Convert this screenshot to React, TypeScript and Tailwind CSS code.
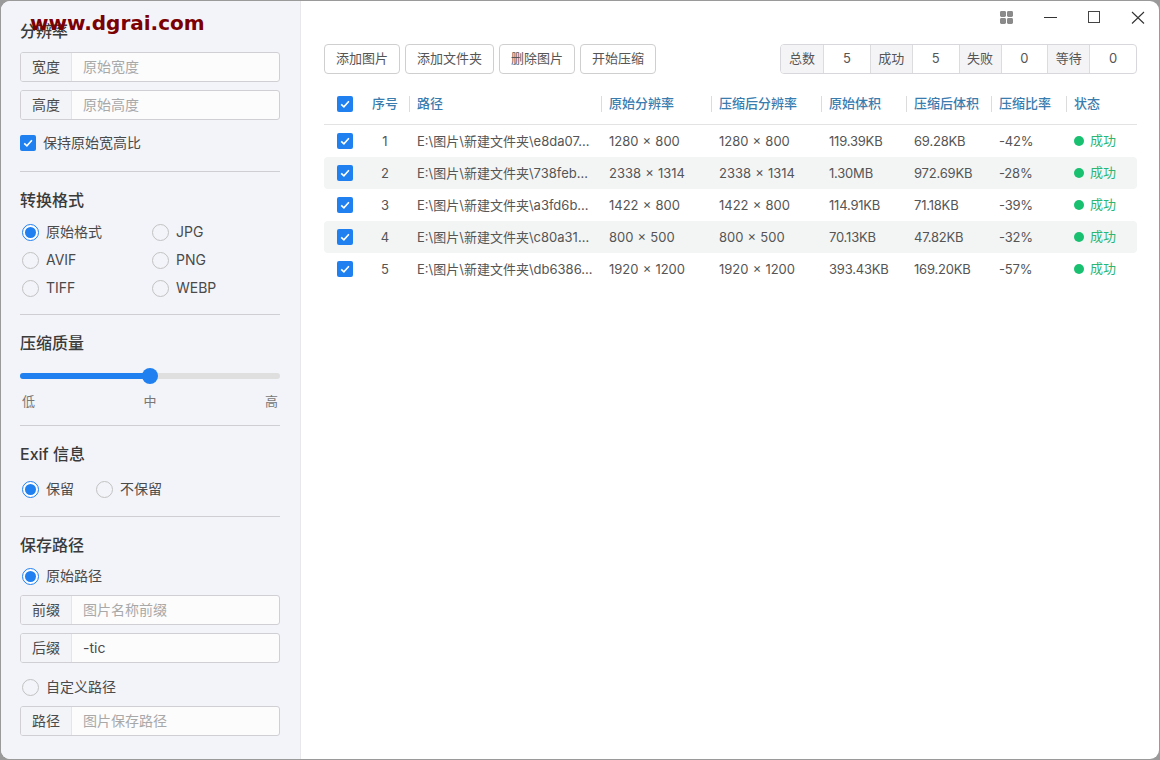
const CJK = '"Noto Sans CJK SC"';

function Check() {
  return (
    <span className="flex h-4 w-4 shrink-0 items-center justify-center rounded-[2px] bg-[#2080f0]">
      <svg width="12" height="12" viewBox="0 0 12 12" fill="none">
        <path d="M2.2 6.3 L4.9 8.9 L9.9 3.3" stroke="#fff" strokeWidth="1.6" />
      </svg>
    </span>
  );
}

function Radio({ on, label, className = "" }: { on?: boolean; label: string; className?: string }) {
  return (
    <div className={"flex items-center " + className}>
      <span className={"flex h-[17px] w-[17px] shrink-0 items-center justify-center rounded-full border " + (on ? "border-[#2080f0] bg-white" : "border-[#c2c2c2] bg-transparent")}>
        {on && <span className="h-[11px] w-[11px] rounded-full bg-[#2080f0]" />}
      </span>
      <span className="ml-[7px] text-[14px] leading-[20px] text-[#4a4a4a]">{label}</span>
    </div>
  );
}

function Field({ label, placeholder, value }: { label: string; placeholder?: string; value?: string }) {
  return (
    <div className="flex h-[30px] overflow-hidden rounded-[3px] border border-[#d0d0d4] bg-[#fcfcfd]">
      <span className="flex w-[51px] shrink-0 items-center justify-center border-r border-[#e4e5e9] bg-[#f3f4f7] pb-[2px] text-[14px] text-[#4a4a4a]">{label}</span>
      <span className={"flex items-center pl-[11px] text-[14px] " + (value ? "pb-[1px] text-[#4a4a4a]" : "pb-[2px] text-[#a8a8a8]")}>{value ?? placeholder}</span>
    </div>
  );
}

function Title({ children, className = "" }: { children: React.ReactNode; className?: string }) {
  return <div className={"text-[16px] font-medium leading-[24px] text-[#3a3a3a] " + className}>{children}</div>;
}

function Divider({ className = "" }: { className?: string }) {
  return <div className={"h-px bg-[#cfcfd3] " + className} />;
}

function Sidebar() {
  return (
    <aside className="flex w-[300px] shrink-0 flex-col border-r border-[#e8e8ea] bg-[#f3f4f9] pl-[19px] pr-5 pt-[18px]">
      <Title>分辨率</Title>
      <div className="mt-[9px] flex flex-col gap-2">
        <Field label="宽度" placeholder="原始宽度" />
        <Field label="高度" placeholder="原始高度" />
      </div>
      <div className="mt-[15px] flex items-center gap-[7px]">
        <Check />
        <span className="text-[14px] leading-[16px] text-[#4a4a4a]">保持原始宽高比</span>
      </div>
      <Divider className="mt-5" />
      <Title className="mt-4">转换格式</Title>
      <div className="mt-[10px] grid grid-cols-[130px_1fr] gap-y-2 pl-[2px]">
        <Radio on label="原始格式" />
        <Radio label="JPG" />
        <Radio label="AVIF" />
        <Radio label="PNG" />
        <Radio label="TIFF" />
        <Radio label="WEBP" />
      </div>
      <Divider className="mt-4" />
      <Title className="mt-4">压缩质量</Title>
      <div className="relative mt-[18px] h-[6px] rounded-full bg-[#dfdfdf]">
        <div className="h-[6px] w-[130px] rounded-full bg-[#2080f0]" />
        <span className="absolute left-[122px] top-[-5px] h-4 w-4 rounded-full bg-[#2080f0]" />
      </div>
      <div className="mt-[13px] flex justify-between pl-[2px] pr-[2px] text-[13px] leading-[18px] text-[#777]">
        <span>低</span>
        <span>中</span>
        <span>高</span>
      </div>
      <Divider className="mt-[15px]" />
      <Title className="mt-4">Exif 信息</Title>
      <div className="mt-[13px] flex pl-[2px]">
        <Radio on label="保留" className="mr-[22px]" />
        <Radio label="不保留" />
      </div>
      <Divider className="mt-[17px]" />
      <Title className="mt-4">保存路径</Title>
      <Radio on label="原始路径" className="mt-[9px] pl-[2px]" />
      <div className="mt-[9px] flex flex-col gap-2">
        <Field label="前缀" placeholder="图片名称前缀" />
        <Field label="后缀" value="-tic" />
      </div>
      <Radio label="自定义路径" className="mt-[14px] pl-[2px]" />
      <div className="mt-[9px]">
        <Field label="路径" placeholder="图片保存路径" />
      </div>
    </aside>
  );
}

function WindowControls() {
  return (
    <div className="flex h-[43px] items-start justify-end">
      <svg className="mt-[10px]" width="14" height="14" viewBox="0 0 14 14" fill="#8a8a8a">
        <rect x="1" y="0" width="6" height="6" rx="1.4" />
        <rect x="8" y="0" width="6" height="6" rx="1.4" />
        <rect x="1" y="7" width="6" height="6" rx="1.4" />
        <rect x="8" y="7" width="6" height="6" rx="1.4" />
      </svg>
      <svg className="ml-[30px] mt-[10px]" width="14" height="14" viewBox="0 0 14 14" fill="none" stroke="#333" strokeWidth="1">
        <path d="M1 6.5 H14" />
      </svg>
      <svg className="ml-[30px] mt-[9px]" width="14" height="14" viewBox="0 0 14 14" fill="none" stroke="#444" strokeWidth="1">
        <rect x="1.5" y="1.5" width="11" height="11" />
      </svg>
      <svg className="ml-[30px] mr-[14px] mt-[10px]" width="14" height="14" viewBox="0 0 14 14" fill="none" stroke="#333" strokeWidth="1.1">
        <path d="M1 1 L13 12.5 M13 1 L1 12.5" />
      </svg>
    </div>
  );
}

function Toolbar() {
  const stats = [
    ["总数", "5"],
    ["成功", "5"],
    ["失败", "0"],
    ["等待", "0"],
  ];
  return (
    <div className="flex h-[30px] items-stretch justify-between">
      <div className="flex gap-[5px]">
        {["添加图片", "添加文件夹", "删除图片", "开始压缩"].map((b) => (
          <span key={b} className="flex items-center rounded-[4px] border border-[#cfcfcf] px-[11px] text-[13px] text-[#555]">{b}</span>
        ))}
      </div>
      <div className="flex w-[357px] overflow-hidden rounded-[4px] border border-[#d8d8dc] text-[13px] text-[#555]">
        {stats.map(([k, v], i) => (
          <div key={k} className="flex flex-1">
            <span className={"flex w-[43px] items-center justify-center border-r border-[#dcdcdf] bg-[#f4f4f7] " + (i ? "border-l" : "")}>{k}</span>
            <span className="flex flex-1 items-center justify-center">{v}</span>
          </div>
        ))}
      </div>
    </div>
  );
}

const GRID = "grid grid-cols-[42px_44px_192px_110px_110px_85px_85px_75px_1fr]";

const HEAD = ["路径", "原始分辨率", "压缩后分辨率", "原始体积", "压缩后体积", "压缩比率", "状态"];

const ROWS = [
  ["1", "E:\\图片\\新建文件夹\\e8da07…", "1280 × 800", "1280 × 800", "119.39KB", "69.28KB", "-42%"],
  ["2", "E:\\图片\\新建文件夹\\738feb…", "2338 × 1314", "2338 × 1314", "1.30MB", "972.69KB", "-28%"],
  ["3", "E:\\图片\\新建文件夹\\a3fd6b…", "1422 × 800", "1422 × 800", "114.91KB", "71.18KB", "-39%"],
  ["4", "E:\\图片\\新建文件夹\\c80a31…", "800 × 500", "800 × 500", "70.13KB", "47.82KB", "-32%"],
  ["5", "E:\\图片\\新建文件夹\\db6386…", "1920 × 1200", "1920 × 1200", "393.43KB", "169.20KB", "-57%"],
];

function Table() {
  return (
    <div className="mt-[14px]">
      <div className={GRID + " h-[37px] items-center border-b border-[#e3e3e3] pb-[4px] text-[13px] font-medium text-[#3a7cae]"}>
        <span className="flex justify-center"><Check /></span>
        <span className="flex h-[16px] items-center justify-center border-r border-[#dcdcdc] pr-[5px]">序号</span>
        {HEAD.map((h, i) => (
          <span key={h} className={"flex h-[16px] items-center pl-[7px] " + (i < 6 ? "border-r border-[#dcdcdc]" : "")}>{h}</span>
        ))}
      </div>
      {ROWS.map((r, i) => (
        <div key={r[0]} className={GRID + " h-8 items-center rounded-[4px] text-[13px] text-[#555] " + (i % 2 ? "bg-[#f3f5f5]" : "")}>
          <span className="flex justify-center"><Check /></span>
          <span className="pr-[6px] pt-px text-center">{r[0]}</span>
          <span className="whitespace-nowrap pl-[7px] pt-px">{r[1]}</span>
          <span className="pl-[7px] pt-px [word-spacing:0.5px]">{r[2]}</span>
          <span className="pl-[7px] pt-px [word-spacing:0.5px]">{r[3]}</span>
          <span className="pl-[7px] pt-px tracking-[-0.2px]">{r[4]}</span>
          <span className="pl-[7px] pt-px tracking-[-0.2px]">{r[5]}</span>
          <span className="pl-[7px] pt-px tracking-[-0.2px]">{r[6]}</span>
          <span className="flex items-center gap-[6px] pl-[7px] text-[#2bb673]">
            <span className="h-[10px] w-[10px] rounded-full bg-[#18c070]" />
            成功
          </span>
        </div>
      ))}
    </div>
  );
}

export default function App() {
  return (
    <div className="relative h-[760px] w-[1160px] overflow-hidden bg-[#9a9a9a]" style={{ fontFamily: `Inter, ${CJK}, sans-serif` }}>
      <div className="mx-px mt-px flex h-[758px] w-[1158px] overflow-hidden rounded-[9px] bg-white">
        <Sidebar />
        <main className="flex min-w-0 flex-1 flex-col pl-[23px] pr-[22px]">
          <div className="-mr-[22px]">
            <WindowControls />
          </div>
          <Toolbar />
          <Table />
        </main>
      </div>
      <div className="absolute left-[30px] top-[8px] text-[20px] font-bold leading-[30px] text-[#7b0000]" style={{ fontFamily: '"DejaVu Sans", sans-serif' }}>www.dgrai.com</div>
    </div>
  );
}
